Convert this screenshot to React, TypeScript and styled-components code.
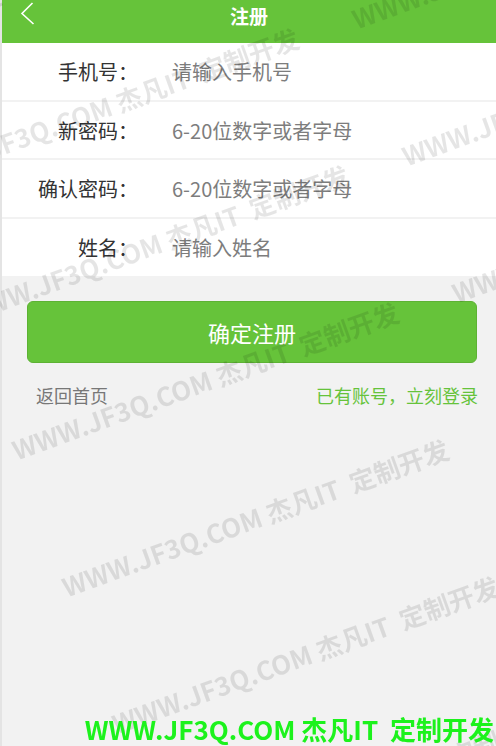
import React from 'react';
import styled, { createGlobalStyle } from 'styled-components';

const GREEN = '#66c33a';

const Global = createGlobalStyle`
  html, body {
    margin: 0;
    padding: 0;
    background: #f2f2f2;
  }
  body {
    font-family: "Noto Sans CJK SC", "Noto Sans", sans-serif;
  }
`;

const Page = styled.div`
  min-height: 100vh;
  border-left: 2px solid #e4e4e4;
  background: #f2f2f2;
  display: flex;
  flex-direction: column;
`;

const Header = styled.header`
  height: 43px;
  background: ${GREEN};
  display: grid;
  grid-template-columns: 1fr auto 1fr;
  align-items: start;
`;

const Back = styled.a`
  display: flex;
  width: 16px;
  height: 25px;
  margin: 1px 0 0 17px;
`;

const Title = styled.h1`
  margin: 0;
  padding-top: 1px;
  line-height: 30px;
  font-size: 19px;
  font-weight: 700;
  color: #fff;
`;

const Form = styled.div`
  display: flex;
  flex-direction: column;
  gap: 2px;
`;

const Row = styled.label`
  height: 56.7px;
  background: #fff;
  display: flex;
  align-items: center;
  font-size: 20px;
`;

const Label = styled.span`
  width: 136px;
  text-align: right;
  color: #333;
  flex: none;
`;

const Input = styled.input`
  flex: 1;
  margin-left: 34px;
  border: 0;
  outline: none;
  padding: 0;
  background: transparent;
  font: inherit;
  color: #333;
  &::placeholder {
    color: #7d7d7d;
  }
`;

const Submit = styled.button`
  margin: 25px 19px 0 25px;
  height: 62px;
  border: 1px solid #5db234;
  border-radius: 6px;
  background: ${GREEN};
  color: #fff;
  font-family: inherit;
  font-size: 22px;
`;

const Links = styled.div`
  display: flex;
  justify-content: space-between;
  margin: 20px 18px 0 34px;
  font-size: 18px;
  line-height: 24px;
`;

const Link = styled.a<{ $accent?: boolean }>`
  color: ${(p) => (p.$accent ? GREEN : '#777')};
  text-decoration: none;
`;

const Layer = styled.div`
  position: fixed;
  inset: 0;
  overflow: hidden;
  pointer-events: none;
`;

const Mark = styled.span`
  position: absolute;
  white-space: pre;
  font-size: 26px;
  font-weight: 700;
  color: rgba(0, 0, 0, 0.1);
  transform: translate(-50%, -50%) rotate(-20deg);
`;

const Footer = styled.div`
  position: fixed;
  right: 2px;
  bottom: 2px;
  white-space: pre;
  font-size: 26px;
  font-weight: 700;
  line-height: 30px;
  color: #1cf21c;
`;

const MARK_TEXT = 'WWW.JF3Q.COM 杰凡IT  定制开发';

// watermark tiles: rows step perpendicular to the text, a second column to the right
const marks: { x: number; y: number }[] = [];
for (let c = 0; c <= 1; c++) {
  for (let k = -4; k <= 2; k++) {
    marks.push({ x: 255 + k * 50 + c * 490, y: 517 + k * 137 - c * 20 });
  }
}

const fields = [
  { label: '手机号：', hint: '请输入手机号', type: 'tel' },
  { label: '新密码：', hint: '6-20位数字或者字母', type: 'password' },
  { label: '确认密码：', hint: '6-20位数字或者字母', type: 'password' },
  { label: '姓名：', hint: '请输入姓名', type: 'text' },
];

export default function App() {
  return (
    <>
      <Global />
      <Page>
        <Header>
          <Back href="#">
            <svg width="16" height="25" viewBox="0 0 16 25">
              <polyline points="13.5,2 3,12.5 14.5,23" fill="none" stroke="#fff" strokeWidth="1.6" />
            </svg>
          </Back>
          <Title>注册</Title>
          <span />
        </Header>
        <Form>
          {fields.map((f) => (
            <Row key={f.label}>
              <Label>{f.label}</Label>
              <Input type={f.type} placeholder={f.hint} />
            </Row>
          ))}
        </Form>
        <Submit>确定注册</Submit>
        <Links>
          <Link href="#">返回首页</Link>
          <Link href="#" $accent>已有账号，立刻登录</Link>
        </Links>
      </Page>
      <Layer>
        {marks.map((m, i) => (
          <Mark key={i} style={{ left: m.x, top: m.y }}>
            {MARK_TEXT}
          </Mark>
        ))}
      </Layer>
      <Footer>{MARK_TEXT}</Footer>
    </>
  );
}
